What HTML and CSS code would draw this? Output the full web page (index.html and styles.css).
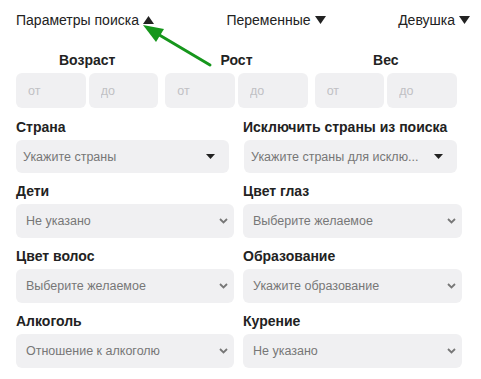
FILE: index.html
```html
<!DOCTYPE html>
<html lang="ru">
<head>
    <meta charset="UTF-8">
    <meta name="viewport" content="width=device-width, initial-scale=1.0">
    <title>Параметры поиска</title>
    <link rel="stylesheet" href="styles.css">
</head>
<body>
    <div class="page">
        <!-- верхняя панель -->
        <div class="topbar">
            <span class="toggle">Параметры поиска
                <svg class="tri" width="11" height="8" viewBox="0 0 11 8"><polygon points="5.5,0 11,8 0,8"/></svg>
            </span>
            <span class="toggle">Переменные
                <svg class="tri" width="11" height="8" viewBox="0 0 11 8"><polygon points="0,0 11,0 5.5,8"/></svg>
            </span>
            <span class="toggle">Девушка
                <svg class="tri" width="11" height="8" viewBox="0 0 11 8"><polygon points="0,0 11,0 5.5,8"/></svg>
            </span>
        </div>

        <div class="ranges">
            <div class="range">
                <div class="range-title">Возраст</div>
                <div class="range-inputs">
                    <input type="text" placeholder="от">
                    <input type="text" placeholder="до">
                </div>
            </div>
            <div class="range">
                <div class="range-title">Рост</div>
                <div class="range-inputs">
                    <input type="text" placeholder="от">
                    <input type="text" placeholder="до">
                </div>
            </div>
            <div class="range">
                <div class="range-title">Вес</div>
                <div class="range-inputs">
                    <input type="text" placeholder="от">
                    <input type="text" placeholder="до">
                </div>
            </div>
        </div>

        <div class="fields">
            <div class="field">
                <label>Страна</label>
                <div class="picker">
                    <span>Укажите страны</span>
                    <svg width="9" height="5" viewBox="0 0 9 5"><polygon points="0,0 9,0 4.5,5"/></svg>
                </div>
            </div>
            <div class="field">
                <label>Исключить страны из поиска</label>
                <div class="picker picker-right">
                    <span>Укажите страны для исклю...</span>
                    <svg width="9" height="5" viewBox="0 0 9 5"><polygon points="0,0 9,0 4.5,5"/></svg>
                </div>
            </div>

            <div class="field">
                <label>Дети</label>
                <div class="select">Не указано<svg width="9" height="6" viewBox="0 0 9 6"><polyline points="1,1 4.5,4.5 8,1"/></svg></div>
            </div>
            <div class="field">
                <label>Цвет глаз</label>
                <div class="select">Выберите желаемое<svg width="9" height="6" viewBox="0 0 9 6"><polyline points="1,1 4.5,4.5 8,1"/></svg></div>
            </div>

            <div class="field">
                <label>Цвет волос</label>
                <div class="select">Выберите желаемое<svg width="9" height="6" viewBox="0 0 9 6"><polyline points="1,1 4.5,4.5 8,1"/></svg></div>
            </div>
            <div class="field">
                <label>Образование</label>
                <div class="select">Укажите образование<svg width="9" height="6" viewBox="0 0 9 6"><polyline points="1,1 4.5,4.5 8,1"/></svg></div>
            </div>

            <div class="field">
                <label>Алкоголь</label>
                <div class="select">Отношение к алкоголю<svg width="9" height="6" viewBox="0 0 9 6"><polyline points="1,1 4.5,4.5 8,1"/></svg></div>
            </div>
            <div class="field">
                <label>Курение</label>
                <div class="select">Не указано<svg width="9" height="6" viewBox="0 0 9 6"><polyline points="1,1 4.5,4.5 8,1"/></svg></div>
            </div>
        </div>

        <!-- стрелка-подсказка -->
        <svg class="hint" width="481" height="80" viewBox="0 0 481 80">
            <line x1="210" y1="65" x2="156" y2="33" stroke="#16961c" stroke-width="3" stroke-linecap="round"/>
            <polygon points="143,25 164,29 156,42" fill="#16961c"/>
        </svg>
    </div>
</body>
</html>
```

FILE: styles.css
```css
body {
    margin: 0;
    font-family: "Liberation Sans", Arial, sans-serif;
    color: #222;
    background: #fff;
}

.page {
    position: relative;
    padding: 10px 11px 0 16px;
}

.topbar {
    display: flex;
    justify-content: space-between;
    align-items: center;
    height: 19px;
    font-size: 14px;
}

.toggle {
    display: flex;
    align-items: center;
    gap: 4px;
    white-space: nowrap;
}

.tri {
    fill: #222;
}

.ranges {
    display: flex;
    gap: 7px;
    width: 441px;
    margin-top: 23px;
}

.range {
    flex: 1;
}

.range-title {
    font-size: 14px;
    font-weight: bold;
    text-align: center;
    line-height: 16px;
    margin-bottom: 5px;
}

.range-inputs {
    display: flex;
    gap: 3px;
}

.range-inputs input {
    width: 100%;
    min-width: 0;
    height: 35px;
    box-sizing: border-box;
    border: none;
    border-radius: 6px;
    background: #f0f0f2;
    padding: 0 12px;
    font-family: inherit;
    font-size: 12.5px;
}

.range-inputs input::placeholder {
    color: #c0c0c4;
}

.fields {
    display: grid;
    grid-template-columns: 218px 219px;
    column-gap: 9px;
    row-gap: 10px;
    margin-top: 11px;
}

.field label {
    display: block;
    font-size: 14px;
    font-weight: bold;
    line-height: 16px;
    margin-bottom: 5px;
}

.picker {
    display: flex;
    align-items: center;
    justify-content: space-between;
    width: 213px;
    height: 33px;
    box-sizing: border-box;
    padding: 0 14px 0 7px;
    background: #f0f0f2;
    border-radius: 6px;
    font-size: 12.5px;
    color: #777;
}

.picker span {
    white-space: nowrap;
}

.picker svg {
    flex: none;
    fill: #222;
}

.picker-right {
    margin-left: 1px;
}

.select {
    display: flex;
    align-items: center;
    justify-content: space-between;
    height: 34px;
    box-sizing: border-box;
    padding: 0 6px 0 10px;
    background: #f0f0f2;
    border-radius: 6px;
    font-size: 12.5px;
    color: #777;
}

.select svg {
    fill: none;
    stroke: #777;
    stroke-width: 1.8;
}

.hint {
    position: absolute;
    top: 0;
    left: 0;
    pointer-events: none;
}
```
